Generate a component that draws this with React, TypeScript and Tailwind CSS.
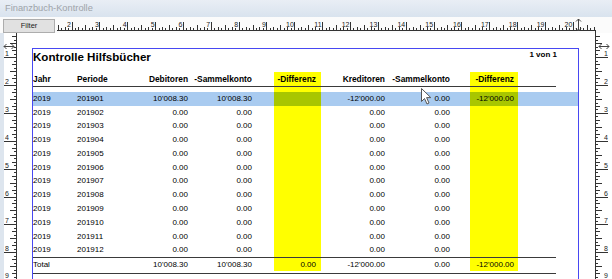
import React from 'react';

const CM = 27.85;
const H0 = 15.8; // x of 0 cm on the top ruler
const V0 = 29.4; // y of 0 cm on the side rulers

type Row = string[];

const data: Row[] = [
  ['2019', '201901', "10'008.30", "10'008.30", '', "-12'000.00", '0.00', "-12'000.00"],
  ...['02', '03', '04', '05', '06', '07', '08', '09', '10', '11', '12'].map((m) => [
    '2019',
    `2019${m}`,
    '0.00',
    '0.00',
    '',
    '0.00',
    '0.00',
    '',
  ]),
];

const total: Row = ['Total', '', "10'008.30", "10'008.30", '0.00', "-12'000.00", '0.00', "-12'000.00"];

const TopRuler = () => {
  const left = 57;
  const ticks: React.ReactNode[] = [];
  for (let i = 0; ; i++) {
    const gx = H0 + (i * CM) / 8;
    if (gx > 595) break;
    if (gx < left) continue;
    const x = Math.round(gx - left) + 0.5;
    const len = i % 8 === 0 ? 8 : i % 4 === 0 ? 5 : i % 2 === 0 ? 3 : 2;
    ticks.push(<line key={i} x1={x} x2={x} y1={13} y2={13 - len} />);
  }
  const labels = [];
  for (let n = 2; n <= 20; n++) {
    labels.push(
      <text key={n} x={H0 + n * CM - left - 0.5} y={10} textAnchor="end">
        {n}
      </text>
    );
  }
  return (
    <svg width={555} height={16} className="block">
      <g stroke="#333" strokeWidth={1}>
        {ticks}
        <line x1={0} x2={538.5} y1={13.5} y2={13.5} />
        <line x1={538.5} x2={538.5} y1={13} y2={16} />
      </g>
      <g fill="#222" fontSize={7} fontFamily="Liberation Sans, Arial, sans-serif">
        {labels}
      </g>
      {/* right margin marker */}
      <g stroke="#444" strokeWidth={1} fill="none">
        <line x1={521.5} x2={521.5} y1={2} y2={14} />
        <path d="M519 4.5 L521.5 2 L524 4.5 M519 11.5 L521.5 14 L524 11.5" />
      </g>
    </svg>
  );
};

const SideRuler = ({ side }: { side: 'left' | 'right' }) => {
  const h = 246;
  const ticks: React.ReactNode[] = [];
  for (let i = 0; ; i++) {
    const gy = V0 + (i * CM) / 8;
    if (gy > 279) break;
    if (gy < 35) continue;
    const y = Math.round(gy - 33) + 0.5;
    const len = i % 8 === 0 ? 12 : i % 4 === 0 ? 6 : i % 2 === 0 ? 4 : 2;
    if (side === 'left') ticks.push(<line key={i} x1={16} x2={16 - len} y1={y} y2={y} />);
    else ticks.push(<line key={i} x1={1} x2={1 + len} y1={y} y2={y} />);
  }
  const labels = [];
  for (let n = 1; n <= 9; n++) {
    const y = Math.min(V0 + n * CM - 33 - 1, 245);
    labels.push(
      <text key={n} x={side === 'left' ? 5 : 9} y={y}>
        {n}
      </text>
    );
  }
  const my = 48 - 33 - 1.5;
  return (
    <svg width={17} height={h} className="block">
      {side === 'left' && <rect x={0} y={0} width={4} height={h} fill="#dde5ee" />}
      <g stroke="#333" strokeWidth={1}>
        {ticks}
        {side === 'left' ? (
          <line x1={16.5} x2={16.5} y1={0} y2={h} />
        ) : (
          <line x1={0.5} x2={0.5} y1={0} y2={h} />
        )}
      </g>
      <g fill="#222" fontSize={7} fontFamily="Liberation Sans, Arial, sans-serif">
        {labels}
      </g>
      {/* top margin marker */}
      <g stroke="#444" strokeWidth={1} fill="none">
        <line x1={4} x2={14} y1={my} y2={my} />
        <path d={`M6.5 ${my - 2.5} L4 ${my} L6.5 ${my + 2.5} M11.5 ${my - 2.5} L14 ${my} L11.5 ${my + 2.5}`} />
      </g>
    </svg>
  );
};

const Cells = ({ v, yellow }: { v: Row; yellow: string }) => (
  <>
    <div className="flex items-center">{v[0]}</div>
    <div className="flex items-center">{v[1]}</div>
    <div className="flex items-center justify-end">{v[2]}</div>
    <div className="flex items-center justify-end">{v[3]}</div>
    <div />
    <div className={`flex items-center justify-end pr-[5px] ${yellow}`}>{v[4]}</div>
    <div className="flex items-center justify-end">{v[5]}</div>
    <div className="flex items-center justify-end">{v[6]}</div>
    <div />
    <div className={`flex items-center justify-end pr-[4px] ${yellow}`}>{v[7]}</div>
    <div />
  </>
);

const grid =
  'grid w-[523px] grid-cols-[44px_53px_58px_64px_22px_47px_64px_65px_20px_48px_38px]';

const Cursor = () => (
  <svg width={12} height={17} viewBox="0 0 12 17" className="absolute left-[421px] top-[88px]">
    <path
      d="M0.5 0.5 L0.5 13.5 L3.5 10.5 L6 16 L8 15 L5.6 9.6 L9.8 9.6 Z"
      fill="#fff"
      stroke="#555"
      strokeWidth={1}
      strokeLinejoin="round"
    />
  </svg>
);

export default function App() {
  return (
    <div className="relative h-[279px] w-[612px] overflow-hidden bg-white font-['Liberation_Sans',Arial,sans-serif] text-black">
      {/* window title */}
      <div className="flex h-[17px] items-center bg-gradient-to-b from-[#e9eef5] to-[#d9e3ee] pl-[5px] text-[9.3px] text-[#9ea3a9]">
        Finanzbuch-Kontrolle
      </div>

      {/* toolbar with ruler */}
      <div className="flex h-[16px] bg-[#fbfbfb]">
        <button className="ml-[3px] mt-[2px] flex h-[14px] w-[52px] items-center justify-center border border-[#adadad] bg-[#e1e1e1] text-[7.5px] leading-none text-[#222]">
          Filter
        </button>
        <div className="ml-[2px]">
          <TopRuler />
        </div>
      </div>

      {/* print preview */}
      <div className="flex h-[246px]">
        <SideRuler side="left" />
        <div className="w-[578px] overflow-hidden bg-white pl-[15px] pr-[16px] pt-[15px]">
          <div className="h-[240px] border-l border-r border-t border-[#4848f2]">
            <div className="flex h-[23px] items-start justify-between pr-[21px]">
              <div className="mt-[1px] text-[11.6px] font-bold leading-[14px]">Kontrolle Hilfsbücher</div>
              <div className="mt-[1px] text-[8px] font-bold leading-[10px]">1 von 1</div>
            </div>

            <div className={`${grid} h-[15px] border-b border-[#3a3a3a] text-[8.4px] font-bold`}>
              <Cells
                v={['Jahr', 'Periode', 'Debitoren', '-Sammelkonto', '-Differenz', 'Kreditoren', '-Sammelkonto', '-Differenz']}
                yellow="bg-[#ffff00]"
              />
            </div>
            <div className={`${grid} h-[5px]`}>
              <Cells v={['', '', '', '', '', '', '', '']} yellow="bg-[#ffff00]" />
            </div>

            {data.map((r, i) =>
              i === 0 ? (
                <div key={i} className="h-[13.77px] bg-[#a9cbf0]">
                  <div className={`${grid} h-full text-[8px]`}>
                    <Cells v={r} yellow="bg-[#a8c600]" />
                  </div>
                </div>
              ) : (
                <div key={i} className="h-[13.77px]">
                  <div className={`${grid} h-full text-[8px]`}>
                    <Cells v={r} yellow="bg-[#ffff00]" />
                  </div>
                </div>
              )
            )}

            <div className={`${grid} h-[17px] border-b border-t border-[#3a3a3a] text-[8px]`}>
              <div className="flex h-[13px] items-center">{total[0]}</div>
              <div />
              <div className="flex h-[13px] items-center justify-end">{total[2]}</div>
              <div className="flex h-[13px] items-center justify-end">{total[3]}</div>
              <div />
              <div className="flex h-[13px] items-center justify-end bg-[#ffff00] pr-[5px]">{total[4]}</div>
              <div className="flex h-[13px] items-center justify-end">{total[5]}</div>
              <div className="flex h-[13px] items-center justify-end">{total[6]}</div>
              <div />
              <div className="flex h-[13px] items-center justify-end bg-[#ffff00] pr-[4px]">{total[7]}</div>
              <div />
            </div>
          </div>
        </div>
        <SideRuler side="right" />
      </div>

      <Cursor />
    </div>
  );
}
